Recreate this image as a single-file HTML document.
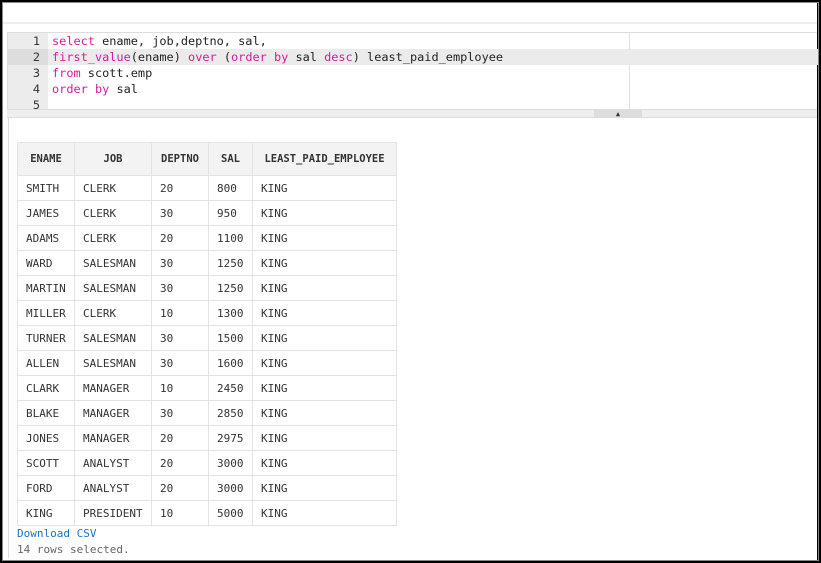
<!DOCTYPE html>
<html><head><meta charset="utf-8"><style>
*{margin:0;padding:0;box-sizing:border-box}
body{width:821px;height:563px;background:#fff;position:relative;overflow:hidden;font-family:"DejaVu Sans Mono","Liberation Mono",monospace}
.frame{position:absolute;left:0;top:0;width:821px;height:563px;border:2px solid #000;border-right-width:4px;border-bottom-width:3px;outline:1px solid #888;outline-offset:-3px}
.topline{position:absolute;left:3px;right:4px;top:22px;height:2px;background:#eee}
.editor{position:absolute;left:7px;top:32px;width:810px;height:77px;border-top:1px solid #ddd;border-left:1px solid #ddd;background:#fff}
.gutter{position:absolute;left:0;top:0;width:40px;height:77px;background:#ececec}
.line{position:absolute;left:0;width:810px;height:16px;font-size:11.9px;line-height:16px}
.ln{position:absolute;left:0;width:32px;text-align:right;color:#333}
.code{position:absolute;left:44px;color:#222;white-space:pre}
.k{color:#d11ba6}
.hl{background:#ebebeb}
.vline{position:absolute;left:621px;top:0;width:1px;height:77px;background:#e2e2e2}
.split{position:absolute;left:7px;top:109px;width:810px;height:9px;background:#eee;border-top:1px solid #ddd;border-bottom:1px solid #ddd}
.handle{position:absolute;left:587px;top:0;width:48px;height:8px;background:#ddd;text-align:center;font-size:7px;line-height:8px;color:#333}
.content{position:absolute;left:8px;top:118px;width:1px;height:440px;background:#ddd}
table{position:absolute;left:17px;top:142px;border-collapse:collapse;font-size:11px;color:#333}
td,th{border:1px solid #e3e3e3;height:25px;padding:0 8px;text-align:left;white-space:nowrap}
th{height:33px;background:#f3f3f3;font-weight:bold;text-align:center;font-size:10.5px;line-height:12px}
.dl{position:absolute;left:17px;top:527px;font-size:11px;color:#1a6fc9}
.rs{position:absolute;left:17px;top:543px;font-size:11px;color:#666}
</style></head><body>
<div class="frame"></div>
<div class="topline"></div>
<div class="editor">
<div class="gutter"></div>
<div class="vline"></div>
<div class="line" style="top:0"><span class="ln">1</span><span class="code"><span class="k">select</span> ename, job,deptno, sal,</span></div>
<div class="line hl" style="top:16px"><span class="ln" style="background:#ddd;width:40px;padding-right:8px">2</span><span class="code"><span class="k">first_value</span>(ename) <span class="k">over</span> (<span class="k">order by</span> sal <span class="k">desc</span>) least_paid_employee</span></div>
<div class="line" style="top:32px"><span class="ln">3</span><span class="code"><span class="k">from</span> scott.emp</span></div>
<div class="line" style="top:48px"><span class="ln">4</span><span class="code"><span class="k">order by</span> sal</span></div>
<div class="line" style="top:64px"><span class="ln">5</span></div>
</div>
<div class="split"><div class="handle">▲</div></div>
<div class="content"></div>
<table>
<tr><th style="width:57px;height:33px">ENAME</th><th style="width:77px">JOB</th><th style="width:57px">DEPTNO</th><th style="width:44px">SAL</th><th style="width:144px">LEAST_PAID_EMPLOYEE</th></tr>
<tr><td>SMITH</td><td>CLERK</td><td>20</td><td>800</td><td>KING</td></tr>
<tr><td>JAMES</td><td>CLERK</td><td>30</td><td>950</td><td>KING</td></tr>
<tr><td>ADAMS</td><td>CLERK</td><td>20</td><td>1100</td><td>KING</td></tr>
<tr><td>WARD</td><td>SALESMAN</td><td>30</td><td>1250</td><td>KING</td></tr>
<tr><td>MARTIN</td><td>SALESMAN</td><td>30</td><td>1250</td><td>KING</td></tr>
<tr><td>MILLER</td><td>CLERK</td><td>10</td><td>1300</td><td>KING</td></tr>
<tr><td>TURNER</td><td>SALESMAN</td><td>30</td><td>1500</td><td>KING</td></tr>
<tr><td>ALLEN</td><td>SALESMAN</td><td>30</td><td>1600</td><td>KING</td></tr>
<tr><td>CLARK</td><td>MANAGER</td><td>10</td><td>2450</td><td>KING</td></tr>
<tr><td>BLAKE</td><td>MANAGER</td><td>30</td><td>2850</td><td>KING</td></tr>
<tr><td>JONES</td><td>MANAGER</td><td>20</td><td>2975</td><td>KING</td></tr>
<tr><td>SCOTT</td><td>ANALYST</td><td>20</td><td>3000</td><td>KING</td></tr>
<tr><td>FORD</td><td>ANALYST</td><td>20</td><td>3000</td><td>KING</td></tr>
<tr><td>KING</td><td>PRESIDENT</td><td>10</td><td>5000</td><td>KING</td></tr>
</table>
<div class="dl">Download CSV</div>
<div class="rs">14 rows selected.</div>
</body></html>
